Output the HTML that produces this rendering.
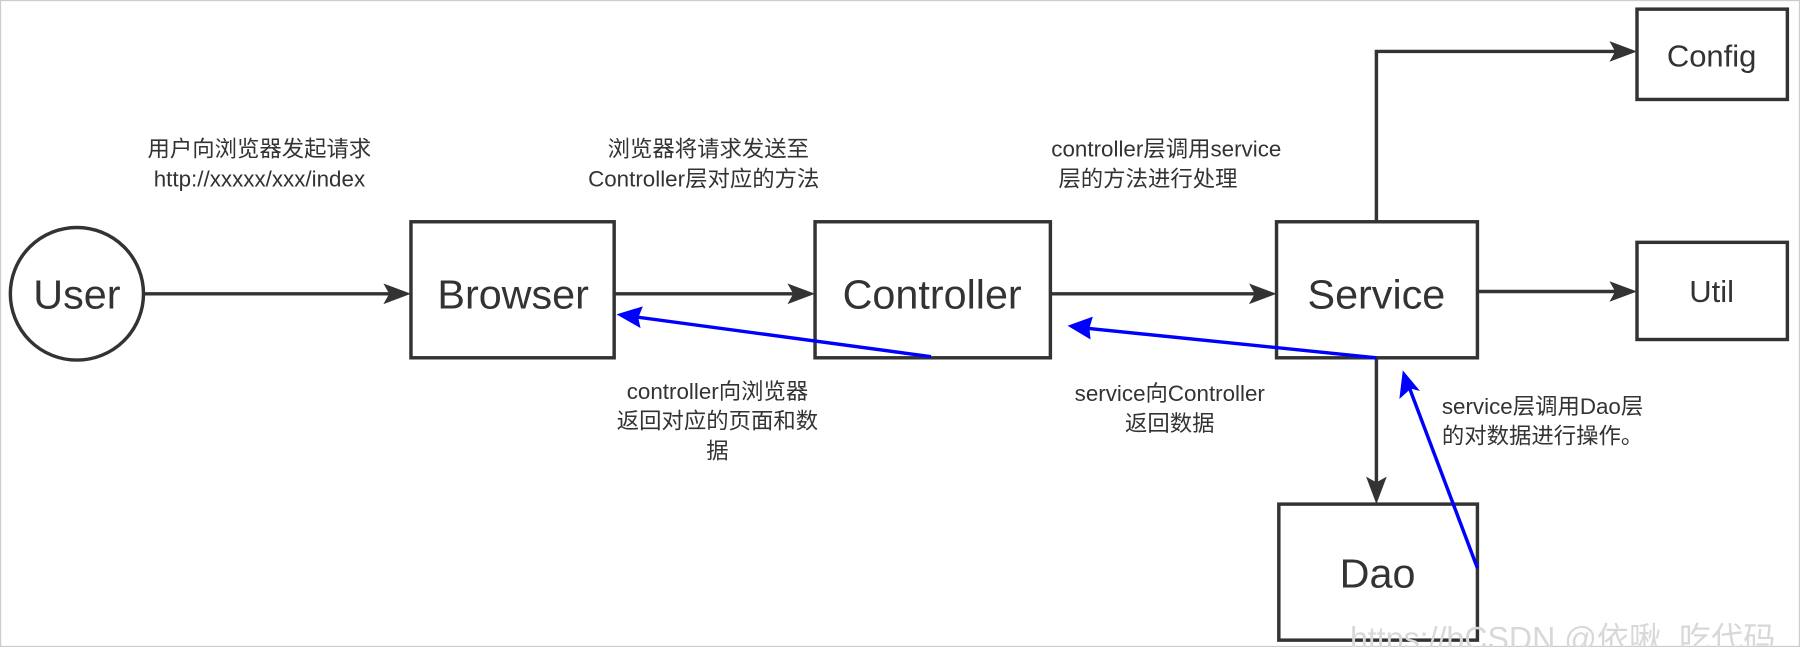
<!DOCTYPE html>
<html><head><meta charset="utf-8"><style>
html,body{margin:0;padding:0;background:#fff;width:1800px;height:647px;overflow:hidden}
svg{display:block}
text{font-family:"Liberation Sans","Noto Sans CJK SC",sans-serif;fill:#333}
.s{font-size:19.5px}
.b{font-size:36px}
</style></head><body>
<svg width="1800" height="647" viewBox="0 0 1568 566" preserveAspectRatio="none" xmlns="http://www.w3.org/2000/svg">
<rect x="0.5" y="0.5" width="1567" height="565" fill="#fff" stroke="#ccc"/>
<g fill="none" stroke="#333" stroke-width="3">
<circle cx="67" cy="257" r="58"/>
<rect x="358" y="194" width="177" height="119"/>
<rect x="710" y="194" width="205" height="119"/>
<rect x="1112" y="194" width="175" height="119"/>
<rect x="1426" y="8" width="131" height="79"/>
<rect x="1426" y="212" width="131" height="85"/>
<rect x="1114" y="441" width="173" height="119"/>
</g>
<g stroke="#333" stroke-width="3" fill="none">
<line x1="125" y1="257" x2="340" y2="257"/>
<line x1="535" y1="257" x2="692" y2="257"/>
<line x1="915" y1="257" x2="1094" y2="257"/>
<line x1="1287" y1="255" x2="1408" y2="255"/>
<polyline points="1199,194 1199,45 1408,45"/>
<line x1="1199" y1="313" x2="1199" y2="423"/>
</g>
<g fill="#333" stroke="none">
<path d="M358,257 L334,248 L339,257 L334,266Z"/>
<path d="M710,257 L686,248 L691,257 L686,266Z"/>
<path d="M1112,257 L1088,248 L1093,257 L1088,266Z"/>
<path d="M1426,255 L1402,246 L1407,255 L1402,264Z"/>
<path d="M1426,45 L1402,36 L1407,45 L1402,54Z"/>
<path d="M1199,441 L1190,417 L1199,422 L1208,417Z"/>
</g>
<g stroke="#0000ff" stroke-width="3">
<line x1="811" y1="312" x2="552" y2="277"/>
<line x1="1199" y1="313" x2="945" y2="287"/>
<line x1="1287" y1="497" x2="1228" y2="340"/>
</g>
<g fill="#0000ff">
<path d="M537,275 L560,268 L556,278 L558,287Z"/>
<path d="M930,285 L952,277 L949,287 L950,297Z"/>
<path d="M1222,324 L1237,342 L1229,340 L1219,349Z"/>
</g>
<text class="b" x="67" y="270" text-anchor="middle">User</text>
<text class="b" x="447" y="270" text-anchor="middle">Browser</text>
<text class="b" x="812" y="270" text-anchor="middle">Controller</text>
<text class="b" x="1199" y="270" text-anchor="middle">Service</text>
<text x="1491" y="58" text-anchor="middle" style="font-size:27px">Config</text>
<text x="1491" y="264" text-anchor="middle" style="font-size:27px">Util</text>
<text class="b" x="1200" y="514" text-anchor="middle">Dao</text>
<g class="s" text-anchor="middle">
<text x="226" y="137">用户向浏览器发起请求</text>
<text x="226" y="163">http://xxxxx/xxx/index</text>
<text x="617" y="137">浏览器将请求发送至</text>
<text x="613" y="163">Controller层对应的方法</text>
<text x="1016" y="137">controller层调用service</text>
<text x="1000" y="163">层的方法进行处理</text>
<text x="625" y="349">controller向浏览器</text>
<text x="625" y="375">返回对应的页面和数</text>
<text x="625" y="401">据</text>
<text x="1019" y="351">service向Controller</text>
<text x="1019" y="377">返回数据</text>
</g>
<g class="s">
<text x="1256" y="362">service层调用Dao层</text>
<text x="1256" y="388">的对数据进行操作。</text>
</g>
<text x="1176" y="568" style="font-size:28px;fill:#d8d8d8">https://bCSDN @依啾_吃代码</text>
</svg>
</body></html>
